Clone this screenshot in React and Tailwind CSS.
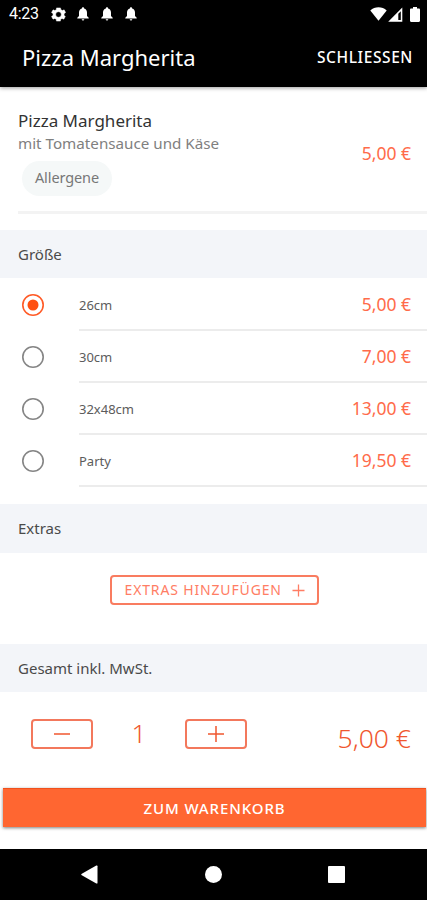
import { useState } from 'react'

const sizes = [
  { name: '26cm', price: '5,00 €' },
  { name: '30cm', price: '7,00 €' },
  { name: '32x48cm', price: '13,00 €' },
  { name: 'Party', price: '19,50 €' }
]

function Bell() {
  return (
    <svg width="12" height="14" viewBox="0 0 12 14" fill="white">
      <path d="M6 0.3c-.7 0-1.1.5-1.1 1.2C3 2 2 3.600 2 5.500V9L.3 10.700v.9h11.400v-.9L10 9V5.500C10 3.600 9 2 7.100 1.500 7.100.8 6.700.3 6 .3zM4.700 12.300a1.300 1.300 0 0 0 2.600 0z" />
    </svg>
  )
}

function StatusBar() {
  return (
    <div className="flex h-7 items-center pl-[9px] pr-[7px]">
      <span className="w-[42px] font-[Roboto] text-[16px] leading-7 tracking-[-0.3px]">4:23</span>
      <svg width="15" height="15" viewBox="2 2 20 20" fill="white" stroke="white" strokeWidth="0.600">
        <path fillRule="evenodd" d="M19.400 13a7.500 7.500 0 0 0 0-2l2.100-1.700-2-3.500-2.500 1a7.500 7.500 0 0 0-1.700-1L14.600 3.200H9.400L9 5.800a7.500 7.500 0 0 0-1.700 1l-2.500-1-2.100 3.500L4.800 11a7.500 7.500 0 0 0 0 2l-2.100 1.700 2 3.500 2.500-1c.6.4 1.100.8 1.700 1l.4 2.600h5.200l.4-2.600a7.500 7.500 0 0 0 1.700-1l2.500 1 2-3.500zM12 15.700a3.700 3.700 0 1 1 0-7.400 3.700 3.700 0 0 1 0 7.400z" />
      </svg>
      <div className="ml-[11px] flex gap-3">
        <Bell />
        <Bell />
        <Bell />
      </div>
      <div className="ml-auto flex items-center">
        <svg width="17" height="14" viewBox="0 0 17 14" fill="white">
          <path d="M8.500 13.700.3 3.500C2.600 1.500 5.400.3 8.500.3s5.900 1.200 8.200 3.200z" />
        </svg>
        <svg className="ml-px" width="15" height="15" viewBox="0 0 15 15" fill="white">
          <path fillRule="evenodd" d="M.2 14.800 14.300.5v14.300zM10.300 6.800v6.200h2.500V4.300z" />
        </svg>
        <svg className="ml-[7px]" width="10" height="15" viewBox="0 0 10 15" fill="white">
          <path d="M3 0h4v1.500h1.800c.7 0 1.200.5 1.200 1.200v11.100c0 .7-.5 1.200-1.200 1.200H1.200C.5 15 0 14.500 0 13.800V2.700c0-.7.5-1.200 1.200-1.200H3z" />
        </svg>
      </div>
    </div>
  )
}

function SectionTitle({ children }) {
  return (
    <h2 className="bg-[#f3f5f9] pl-[18px] text-[15px] leading-[48px] text-[#4a4a4a]">{children}</h2>
  )
}

function Radio({ checked }) {
  return (
    <svg width="24" height="24" viewBox="0 0 24 24" fill="none">
      <circle cx="12" cy="12" r="10.200" stroke={checked ? '#ff5a26' : '#858585'} strokeWidth="1.600" />
      {checked && <circle cx="12" cy="12" r="5.500" fill="#ff5011" />}
    </svg>
  )
}

export default function App() {
  const [selected, setSelected] = useState(0)
  const [count, setCount] = useState(1)

  return (
    <div className="flex h-[900px] w-[427px] flex-col overflow-hidden bg-white font-['Noto_Sans',sans-serif]">
      <header className="h-[87px] shrink-0 bg-black text-white shadow-[0_1px_4px_rgba(0,0,0,0.4)]">
        <StatusBar />
        <div className="flex h-[59px] items-center justify-between pl-[22px] pr-[14px]">
          <h1 className="text-[22px] leading-[59px]">Pizza Margherita</h1>
          <button className="text-[15.500px] font-medium tracking-[0.600px]">SCHLIESSEN</button>
        </div>
      </header>

      <main className="h-[762px] shrink-0">
        <div className="ml-[18px] flex h-[127px] justify-between border-b-3 border-[#f3f3f3] pr-4 pt-[22px]">
          <div>
            <p className="text-[17px] leading-6 text-[#333]">Pizza Margherita</p>
            <p className="text-[15.200px] leading-[21px] text-[#808080]">mit Tomatensauce und Käse</p>
            <button className="ml-1 mt-[7px] block h-[35px] w-[90px] rounded-full bg-[#f5f8f8] pb-px text-[14.500px] tracking-[-0.1px] text-[#777]">
              Allergene
            </button>
          </div>
          <p className="mt-[32px] text-[17.500px] leading-6 text-[#ff6b4a]">5,00 €</p>
        </div>

        <div className="pt-4">
          <SectionTitle>Größe</SectionTitle>
        </div>
        <ul className="h-[226px] pt-px">
          {sizes.map((size, i) => (
            <li key={size.name} className="flex h-[52px] cursor-pointer" onClick={() => setSelected(i)}>
              <span className="w-[79px] pl-[21px] pt-[14px]"><Radio checked={i === selected} /></span>
              <div className="flex flex-1 items-center justify-between border-b-2 border-[#ececec] pr-4">
                <span className="pt-[3px] text-[13px] text-[#5c5c5c]">{size.name}</span>
                <span className="text-[17.500px] text-[#ff6b4a]">{size.price}</span>
              </div>
            </li>
          ))}
        </ul>

        <div className="h-[49px] bg-[#f3f5f9]">
          <SectionTitle>Extras</SectionTitle>
        </div>
        <div className="flex h-[91px] justify-center pl-px pt-[22px]">
          <button className="flex h-[30px] w-[209px] items-center justify-between rounded-[4px] border-2 border-[#f97c60] pl-[13px] pr-[12px] text-[#ff7d64]">
            <span className="pb-[2px] text-[14px] tracking-[0.850px]">EXTRAS HINZUFÜGEN</span>
            <svg width="13" height="13" viewBox="0 0 13 13" stroke="currentColor" strokeWidth="1.300">
              <path d="M6.500 0.500v12M.5 6.500h12" />
            </svg>
          </button>
        </div>

        <SectionTitle>Gesamt inkl. MwSt.</SectionTitle>
        <div className="flex h-[96px] pl-[31px] pr-4 pt-[27px] text-[#f0572f]">
          <button className="flex h-[30px] w-[62px] items-center justify-center rounded-[4px] border-2 border-[#f3785c]" onClick={() => setCount(Math.max(1, count - 1))}>
            <svg width="16" height="16" viewBox="0 0 16 16" stroke="currentColor" strokeWidth="1.500">
              <path d="M0 8h16" />
            </svg>
          </button>
          <span className="w-[92px] text-center text-[26px] font-light leading-[28px]">{count}</span>
          <button className="flex h-[30px] w-[62px] items-center justify-center rounded-[4px] border-2 border-[#f3785c]" onClick={() => setCount(count + 1)}>
            <svg width="16" height="16" viewBox="0 0 16 16" stroke="currentColor" strokeWidth="1.500">
              <path d="M0 8h16M8 0v16" />
            </svg>
          </button>
          <span className="ml-auto pt-1 text-[26.500px] font-light leading-[30px]">5,00 €</span>
        </div>

        <button className="ml-[3px] block h-[39px] w-[423px] border-t border-[#f0501c] bg-[#ff6631] text-[15px] font-medium tracking-[0.900px] text-white shadow-[0_1px_3px_rgba(0,0,0,0.5)]">
          ZUM WARENKORB
        </button>
      </main>

      <nav className="flex h-[51px] shrink-0 items-center bg-black">
        <svg className="ml-[81px]" width="17" height="19" viewBox="0 0 17 19" fill="white">
          <path d="M.8 8.700 15.300.6Q16.500 0 16.500 1.300v16.400q0 1.300-1.200.7L.8 10.300Q-.4 9.500.8 8.700z" />
        </svg>
        <div className="ml-[107px] size-[17px] rounded-full bg-white" />
        <div className="ml-[106px] size-[17px] rounded-[1px] bg-white" />
      </nav>
    </div>
  )
}
